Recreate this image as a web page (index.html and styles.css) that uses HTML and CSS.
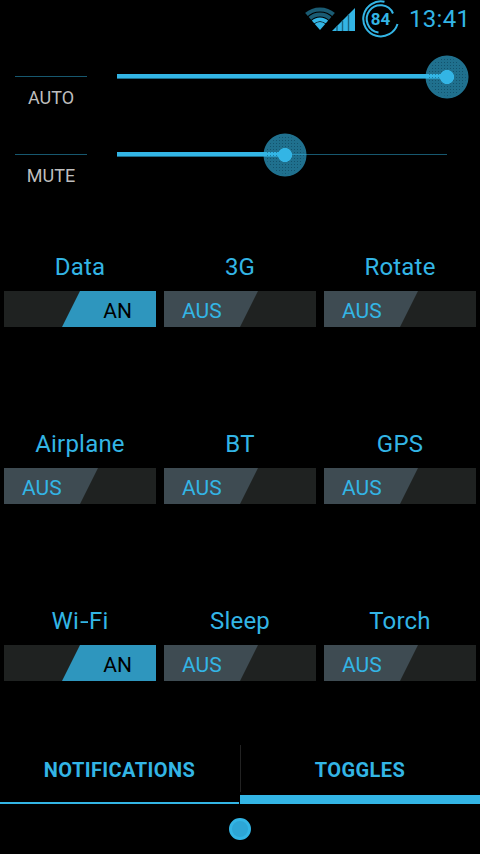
FILE: index.html
```html
<!DOCTYPE html>
<html lang="de">

<head>
	<meta charset="UTF-8">
	<title>Toggles</title>
	<link rel="stylesheet" href="styles.css">
</head>

<body>
	<header class="statusbar">
		<svg class="wifi" width="30" height="24" viewBox="0 0 30 24">
			<circle class="dim" cx="15" cy="23" r="20.6"/>
			<circle class="dim" cx="15" cy="23" r="15.5"/>
			<circle class="lit-ring" cx="15" cy="23" r="10.6"/>
			<circle class="lit" cx="15" cy="23" r="8"/>
		</svg>
		<svg class="signal" width="23" height="23" viewBox="0 0 23 23">
			<path class="lit" d="M0 23 L23 0 V23 Z"/>
			<path class="stripe" d="M5 18V23 M10.5 12.5V23 M16.5 6.5V23"/>
		</svg>
		<svg class="battery" width="40" height="38" viewBox="0 0 40 38">
			<path class="ring" d="M24.5 1.8 A17.5 17.5 0 1 0 37.5 24"/>
			<path class="ring" d="M33 13.5 A13.7 13.7 0 1 0 18.5 32.5"/>
			<text x="20.5" y="25">84</text>
		</svg>
		<span class="clock">13:41</span>
	</header>

	<main>
		<section class="sliders">
			<div class="slider-row">
				<div class="mode">AUTO</div>
				<div class="track">
					<div class="fill" style="width: 100%"><span class="thumb"></span></div>
				</div>
			</div>
			<div class="slider-row">
				<div class="mode">MUTE</div>
				<div class="track">
					<div class="fill" style="width: 51%"><span class="thumb"></span></div>
				</div>
			</div>
		</section>

		<section class="toggles">
			<div class="toggle on"><h2>Data</h2><div class="switch"><span>AN</span></div></div>
			<div class="toggle"><h2>3G</h2><div class="switch"><span>AUS</span></div></div>
			<div class="toggle"><h2>Rotate</h2><div class="switch"><span>AUS</span></div></div>
			<div class="toggle"><h2>Airplane</h2><div class="switch"><span>AUS</span></div></div>
			<div class="toggle"><h2>BT</h2><div class="switch"><span>AUS</span></div></div>
			<div class="toggle"><h2>GPS</h2><div class="switch"><span>AUS</span></div></div>
			<div class="toggle on"><h2>Wi<span class="dash">-</span>Fi</h2><div class="switch"><span>AN</span></div></div>
			<div class="toggle"><h2>Sleep</h2><div class="switch"><span>AUS</span></div></div>
			<div class="toggle"><h2>Torch</h2><div class="switch"><span>AUS</span></div></div>
		</section>
	</main>

	<nav class="tabs">
		<div class="tab">NOTIFICATIONS</div>
		<div class="divider"></div>
		<div class="tab active">TOGGLES</div>
	</nav>
	<footer class="handle"><span></span></footer>
</body>

</html>
```
FILE: styles.css
```css
* {
    box-sizing: border-box;
}
body {
    margin: 0;
    width: 480px;
    height: 854px;
    overflow: hidden;
    background-color: #000;
    color: #33b5e5;
    font-family: Roboto, sans-serif;
    display: flex;
    flex-direction: column;
}

/* status bar */
.statusbar {
    height: 38px;
    display: flex;
    justify-content: flex-end;
    align-items: center;
    padding-right: 11px;
}
.wifi {
    margin-right: -3px;
    clip-path: polygon(15px 23px, -5px 0, 35px 0);
}
.signal {
    margin-right: 5px;
}
.lit { fill: #33b5e5; }
.dim, .lit-ring {
    fill: none;
    stroke: #1a5b73;
    stroke-width: 4;
}
.lit-ring {
    stroke: #33b5e5;
    stroke-width: 3.6;
}
.stripe {
    stroke: #1a6480;
    stroke-width: 1.4;
}
.ring {
    fill: none;
    stroke: #33b5e5;
    stroke-width: 2;
}
.battery text {
    fill: #33b5e5;
    font-size: 17px;
    font-weight: 700;
    text-anchor: middle;
}
.clock {
    width: 60px;
    margin-left: 9px;
    font-size: 24px;
    letter-spacing: 0.3px;
    line-height: 38px;
    text-align: right;
    white-space: nowrap;
}

/* sliders */
.sliders {
    height: 212px;
    padding: 38px 33px 0 15px;
}
.slider-row {
    height: 78px;
    display: flex;
    gap: 30px;
}
.mode {
    width: 72px;
    height: 40px;
    padding-top: 10px;
    border-top: 1px solid #17586f;
    color: #bebebe;
    font-size: 18px;
    line-height: 21px;
    text-align: center;
}
.track {
    flex: 1;
    height: 1px;
    background-color: #17586f;
}
.fill {
    position: relative;
    top: -2px;
    height: 5px;
    background-color: #33b5e5;
    border-bottom: 1px solid #1b6d8b;
}
.thumb {
    position: absolute;
    right: -22px;
    top: -19px;
    width: 44px;
    height: 44px;
    border-radius: 50%;
    background:
        radial-gradient(circle, #33b5e5 6.7px, transparent 7.3px),
        radial-gradient(circle, rgba(51, 181, 229, 0.62) 21px, transparent 22px);
}
/* halftone dots inside the thumb */
.thumb::before {
    content: "";
    position: absolute;
    inset: 3px;
    border-radius: 50%;
    background-image: radial-gradient(circle, rgba(0, 40, 60, 0.4) 0.6px, transparent 0.9px);
    background-size: 3px 3px;
    -webkit-mask: radial-gradient(circle, transparent 7px, #000 8px);
    mask: radial-gradient(circle, transparent 7px, #000 8px);
}

/* toggles */
.toggles {
    height: 495px;
    display: grid;
    grid-template-columns: repeat(3, 160px);
    grid-template-rows: 177px 177px 141px;
}
.toggle {
    padding: 0 4px;
}
.toggle h2 {
    margin: 0;
    height: 41px;
    padding-top: 3px;
    font-size: 24px;
    font-weight: 400;
    letter-spacing: 0.2px;
    line-height: 28px;
    text-align: center;
}
.dash {
    display: inline-block;
    margin: 0 1.5px;
    transform: scaleX(1.3);
}
.switch {
    height: 36px;
    background-color: #1f2221;
    display: flex;
}
.switch span {
    width: 94px;
    padding: 2px 17px 0 18px;
    background-color: #3e4b52;
    clip-path: polygon(0 0, 100% 0, 76px 100%, 0 100%);
    font-size: 21px;
    line-height: 36px;
}
.on .switch {
    justify-content: flex-end;
}
.on .switch span {
    padding: 2px 24px 0 0;
    background-color: #2e96be;
    clip-path: polygon(18px 0, 100% 0, 100% 100%, 0 100%);
    color: #000;
    text-align: right;
}

/* tabs */
.tabs {
    height: 59px;
    display: flex;
    font-size: 20px;
    font-weight: 700;
    letter-spacing: 0.4px;
    line-height: 50px;
    text-align: center;
}
.tab {
    width: 239px;
    margin-right: 1px;
    border-bottom: 2px solid #33b5e5;
}
.tab.active {
    width: 240px;
    margin-right: 0;
    border-bottom-width: 9px;
}
.divider {
    width: 1px;
    height: 47px;
    margin-right: -1px;
    background-color: #222;
}
.handle {
    height: 50px;
    display: flex;
    justify-content: center;
    align-items: center;
}
.handle span {
    width: 22px;
    height: 22px;
    border-radius: 50%;
    background-color: #2da6d6;
    border: 3px solid #33b5e5;
}
```
